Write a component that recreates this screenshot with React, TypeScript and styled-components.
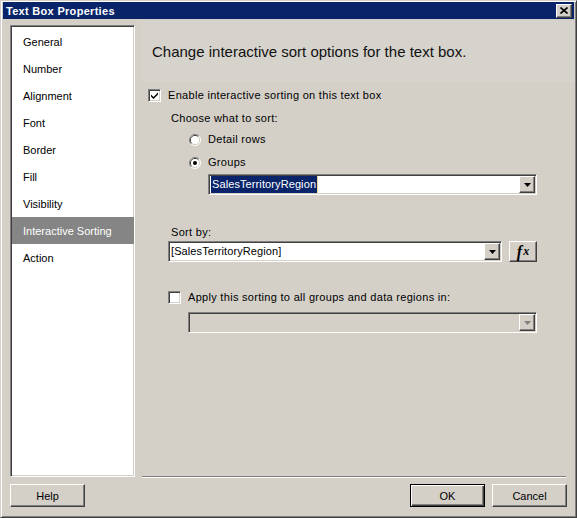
import React from "react";
import styled, { createGlobalStyle } from "styled-components";

const GlobalStyle = createGlobalStyle`
	html, body {
		margin: 0;
		padding: 0;
		background: #d4d0c8;
	}
	* {
		box-sizing: border-box;
	}
`;

const FACE = "#d4d0c8";
const SHADOW = "#808080";
const DARK = "#404040";
const FONT = `"Liberation Sans", Arial, sans-serif`;

const pages = ["General", "Number", "Alignment", "Font", "Border", "Fill", "Visibility", "Interactive Sorting", "Action"];

function Arrow({ disabled }: { disabled?: boolean }) {
	return (
		<svg width="7" height="4" viewBox="0 0 7 4">
			<polygon points="0,0 7,0 3.5,4" fill={disabled ? SHADOW : "#000"} />
		</svg>
	);
}

function Radio({ checked }: { checked?: boolean }) {
	return (
		<svg width="12" height="12" viewBox="0 0 12 12">
			<path d="M2.11 9.89 A5.5 5.5 0 0 1 9.89 2.11" stroke={SHADOW} fill="none" />
			<path d="M9.89 2.11 A5.5 5.5 0 0 1 2.11 9.89" stroke="#fff" fill="none" />
			<path d="M2.82 9.18 A4.5 4.5 0 0 1 9.18 2.82" stroke={DARK} fill="none" />
			<path d="M9.18 2.82 A4.5 4.5 0 0 1 2.82 9.18" stroke={FACE} fill="none" />
			<circle cx="6" cy="6" r="4" fill="#fff" />
			{checked && <circle cx="6" cy="6" r="2" fill="#000" />}
		</svg>
	);
}

function Check({ checked }: { checked?: boolean }) {
	return (
		<CheckBox>
			{checked && (
				<svg width="9" height="9" viewBox="0 0 9 9">
					<path d="M1 3.5 L3.5 6 L8 1.5 L8 3.5 L3.5 8 L1 5.5 Z" fill="#000" />
				</svg>
			)}
		</CheckBox>
	);
}

export default function App() {
	return (
		<>
			<GlobalStyle />
			<Window>
				<TitleBar>
					<TitleText>Text Box Properties</TitleText>
					<CloseButton>
						<svg width="8" height="7" viewBox="0 0 8 7">
							<path d="M0.5 0.5 L7.5 6.5 M7.5 0.5 L0.5 6.5" stroke="#000" strokeWidth="1.6" />
						</svg>
					</CloseButton>
				</TitleBar>
				<Body>
					<PageList>
						{pages.map((p) => (
							<PageItem key={p} $selected={p === "Interactive Sorting"}>
								{p}
							</PageItem>
						))}
					</PageList>
					<Panel>
						<Banner>Change interactive sort options for the text box.</Banner>
						<Content>
							<Row $top={7} $indent={6}>
								<Check checked />
								<Label>Enable interactive sorting on this text box</Label>
							</Row>
							<Row $top={10} $indent={29}>
								<Label>Choose what to sort:</Label>
							</Row>
							<Row $top={8} $indent={47}>
								<Radio />
								<Label>Detail rows</Label>
							</Row>
							<Row $top={10} $indent={47}>
								<Radio checked />
								<Label>Groups</Label>
							</Row>
							<Row $top={5} $indent={66}>
								<Combo $width={329}>
									<ComboText>
										<Selected>SalesTerritoryRegion</Selected>
										<Caret />
									</ComboText>
									<DropButton>
										<Arrow />
									</DropButton>
								</Combo>
							</Row>
							<Row $top={31} $indent={29}>
								<Label>Sort by:</Label>
							</Row>
							<Row $top={2} $indent={26}>
								<Combo $width={334}>
									<ComboText>[SalesTerritoryRegion]</ComboText>
									<DropButton>
										<Arrow />
									</DropButton>
								</Combo>
								<FxButton>
									<i>f</i>
									<small>x</small>
								</FxButton>
							</Row>
							<Row $top={29} $indent={26}>
								<Check />
								<Label>Apply this sorting to all groups and data regions in:</Label>
							</Row>
							<Row $top={8} $indent={46}>
								<Combo $width={349} $disabled>
									<ComboText />
									<DropButton>
										<Arrow disabled />
									</DropButton>
								</Combo>
							</Row>
						</Content>
						<Separator />
					</Panel>
				</Body>
				<Footer>
					<Button>Help</Button>
					<Actions>
						<Button $default>OK</Button>
						<Button>Cancel</Button>
					</Actions>
				</Footer>
			</Window>
		</>
	);
}

const Window = styled.div`
	width: 577px;
	height: 518px;
	display: flex;
	flex-direction: column;
	padding: 1px;
	background: ${FACE};
	border: 1px solid;
	border-color: ${FACE} ${DARK} ${DARK} ${FACE};
	box-shadow: inset 1px 1px #fff, inset -1px -1px ${SHADOW};
	font-family: ${FONT};
	font-size: 11px;
	color: #000;
`;

const TitleBar = styled.div`
	height: 17px;
	margin: 0 1px;
	display: flex;
	align-items: center;
	justify-content: space-between;
	padding: 0 2px 0 3px;
	background: #0a246a;
`;

const TitleText = styled.span`
	color: #fff;
	font-weight: bold;
	font-size: 11px;
	letter-spacing: 0.3px;
`;

const Raised = `
	background: ${FACE};
	border: 1px solid;
	border-color: #fff ${DARK} ${DARK} #fff;
	box-shadow: inset -1px -1px ${SHADOW};
`;

const CloseButton = styled.div`
	${Raised}
	width: 16px;
	height: 14px;
	display: flex;
	align-items: center;
	justify-content: center;
	padding-bottom: 1px;
`;

const Body = styled.div`
	height: 459px;
	display: flex;
	padding-left: 8px;
`;

const Sunken = `
	border: 1px solid;
	border-color: ${SHADOW} #fff #fff ${SHADOW};
	box-shadow: inset 1px 1px ${DARK}, inset -1px -1px ${FACE};
`;

const PageList = styled.div`
	width: 125px;
	margin: 6px 0 1px;
	padding: 2px 1px 1px;
	background: #fff;
	${Sunken}
	display: flex;
	flex-direction: column;
`;

const PageItem = styled.div<{ $selected?: boolean }>`
	height: 27px;
	display: flex;
	align-items: center;
	padding-left: 11px;
	margin-right: -1px;
	background: ${(p) => (p.$selected ? "#858585" : "transparent")};
	color: ${(p) => (p.$selected ? "#fff" : "#000")};
`;

const Panel = styled.div`
	flex: 1;
	margin: 2px 0 0 7px;
	display: flex;
	flex-direction: column;
`;

const Banner = styled.div`
	height: 61px;
	display: flex;
	align-items: center;
	padding: 0 0 1px 10px;
	background: #d6d3cc;
	font-size: 15px;
	color: #111;
`;

const Content = styled.div`
	flex: 1;
	display: flex;
	flex-direction: column;
`;

const Row = styled.div<{ $top: number; $indent: number }>`
	display: flex;
	align-items: center;
	gap: 7px;
	min-height: 13px;
	margin-top: ${(p) => p.$top}px;
	padding-left: ${(p) => p.$indent}px;
`;

const Label = styled.span`
	line-height: 13px;
	white-space: nowrap;
	letter-spacing: 0.3px;
`;

const CheckBox = styled.div`
	width: 13px;
	height: 13px;
	background: #fff;
	${Sunken}
	display: flex;
	align-items: center;
	justify-content: center;
`;

const Combo = styled.div<{ $width: number; $disabled?: boolean }>`
	width: ${(p) => p.$width}px;
	height: 21px;
	display: flex;
	background: ${(p) => (p.$disabled ? FACE : "#fff")};
	${Sunken}
	padding: 1px;
`;

const ComboText = styled.div`
	flex: 1;
	display: flex;
	align-items: stretch;
	padding-left: 1px;
	line-height: 17px;
	letter-spacing: 0.1px;
`;

const Selected = styled.span`
	background: #0a246a;
	color: #fff;
	padding: 0 1px;
`;

const Caret = styled.span`
	width: 1px;
	background: #e8d890;
`;

const DropButton = styled.div`
	${Raised}
	width: 16px;
	height: 17px;
	display: flex;
	align-items: center;
	justify-content: center;
`;

const FxButton = styled.div`
	${Raised}
	width: 28px;
	height: 21px;
	display: flex;
	align-items: center;
	justify-content: center;
	font-family: "Liberation Serif", "Times New Roman", serif;
	font-weight: bold;
	font-size: 16px;
	i {
		font-style: italic;
	}
	small {
		font-size: 12px;
		font-style: italic;
		margin-left: 1px;
	}
`;

const Separator = styled.div`
	height: 2px;
	margin-right: 9px;
	border-top: 1px solid ${SHADOW};
	border-bottom: 1px solid #fff;
`;

const Footer = styled.div`
	display: flex;
	justify-content: space-between;
	padding: 6px 8px 0 8px;
`;

const Actions = styled.div`
	display: flex;
	gap: 7px;
`;

const Button = styled.div<{ $default?: boolean }>`
	width: 75px;
	height: 23px;
	display: flex;
	align-items: center;
	justify-content: center;
	background: ${FACE};
	border: 1px solid;
	border-color: ${(p) => (p.$default ? "#000" : `#fff ${DARK} ${DARK} #fff`)};
	box-shadow: ${(p) =>
		p.$default
			? `inset 1px 1px #fff, inset -1px -1px ${DARK}, inset -2px -2px ${SHADOW}`
			: `inset -1px -1px ${SHADOW}`};
`;
